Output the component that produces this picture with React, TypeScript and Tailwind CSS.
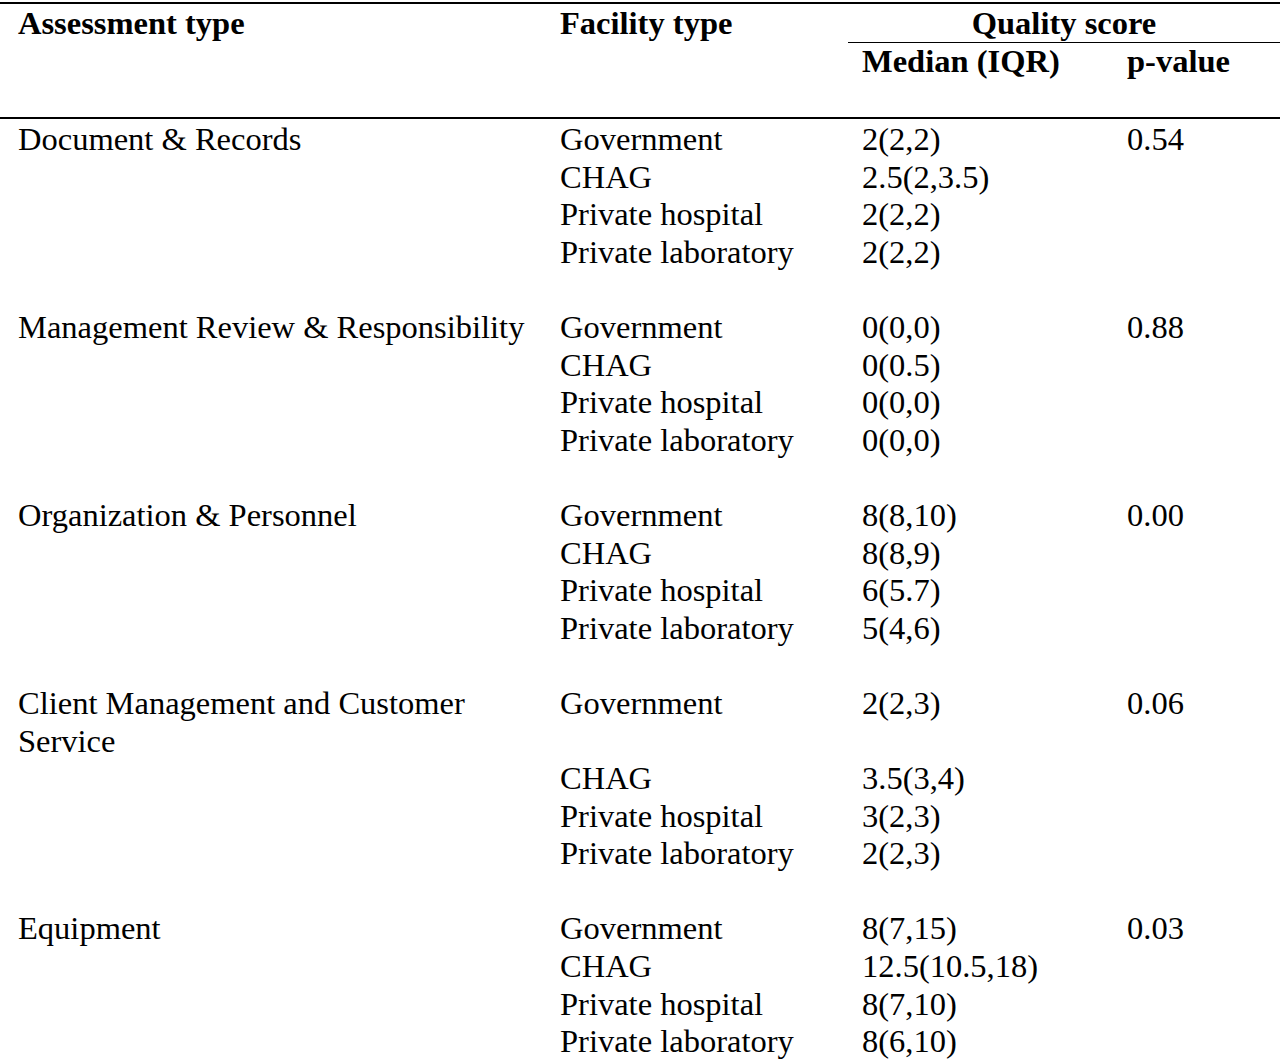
type Line = { facility: string; value: string };

interface Group {
  label: string;
  p: string;
  lines: Line[];
}

const groups: Group[] = [
  {
    label: 'Document & Records',
    p: '0.54',
    lines: [
      { facility: 'Government', value: '2(2,2)' },
      { facility: 'CHAG', value: '2.5(2,3.5)' },
      { facility: 'Private hospital', value: '2(2,2)' },
      { facility: 'Private laboratory', value: '2(2,2)' },
    ],
  },
  {
    label: 'Management Review & Responsibility',
    p: '0.88',
    lines: [
      { facility: 'Government', value: '0(0,0)' },
      { facility: 'CHAG', value: '0(0.5)' },
      { facility: 'Private hospital', value: '0(0,0)' },
      { facility: 'Private laboratory', value: '0(0,0)' },
    ],
  },
  {
    label: 'Organization & Personnel',
    p: '0.00',
    lines: [
      { facility: 'Government', value: '8(8,10)' },
      { facility: 'CHAG', value: '8(8,9)' },
      { facility: 'Private hospital', value: '6(5.7)' },
      { facility: 'Private laboratory', value: '5(4,6)' },
    ],
  },
  {
    label: 'Client Management and Customer Service',
    p: '0.06',
    lines: [
      { facility: 'Government', value: '2(2,3)' },
      { facility: 'CHAG', value: '3.5(3,4)' },
      { facility: 'Private hospital', value: '3(2,3)' },
      { facility: 'Private laboratory', value: '2(2,3)' },
    ],
  },
  {
    label: 'Equipment',
    p: '0.03',
    lines: [
      { facility: 'Government', value: '8(7,15)' },
      { facility: 'CHAG', value: '12.5(10.5,18)' },
      { facility: 'Private hospital', value: '8(7,10)' },
      { facility: 'Private laboratory', value: '8(6,10)' },
    ],
  },
];

export default function App() {
  return (
    <div className="w-[1280px] h-[1062px] overflow-hidden bg-white text-black font-['Liberation_Serif','Times_New_Roman',serif] text-[32.5px] leading-[37.6px]">
      <div className="h-[2px] mt-[2px] bg-black" />

      {/* Header */}
      <div className="grid grid-cols-[560px_288px_1fr] h-[115px] pt-[1px] border-b-2 border-black font-bold">
        <div className="pl-[18px]">Assessment type</div>
        <div>Facility type</div>
        <div>
          <div className="text-center border-b-[1.5px] border-black h-[38px]">Quality score</div>
          <div className="grid grid-cols-[265px_1fr]">
            <div className="pl-[14px]">Median (IQR)</div>
            <div className="pl-[14px]">p-value</div>
          </div>
        </div>
      </div>

      {/* Body */}
      <div className="pt-[2px]">
        {groups.map((g) => (
          <div key={g.label} className="grid grid-cols-[560px_288px_265px_1fr] mb-[37.6px]">
            <div className="pl-[18px] pr-[30px]">{g.label}</div>
            <div>{g.lines[0].facility}</div>
            <div className="pl-[14px]">{g.lines[0].value}</div>
            <div className="pl-[14px]">{g.p}</div>
            {g.lines.slice(1).map((l) => (
              <div key={l.facility} className="contents">
                <div />
                <div>{l.facility}</div>
                <div className="pl-[14px]">{l.value}</div>
                <div />
              </div>
            ))}
          </div>
        ))}
      </div>
    </div>
  );
}
